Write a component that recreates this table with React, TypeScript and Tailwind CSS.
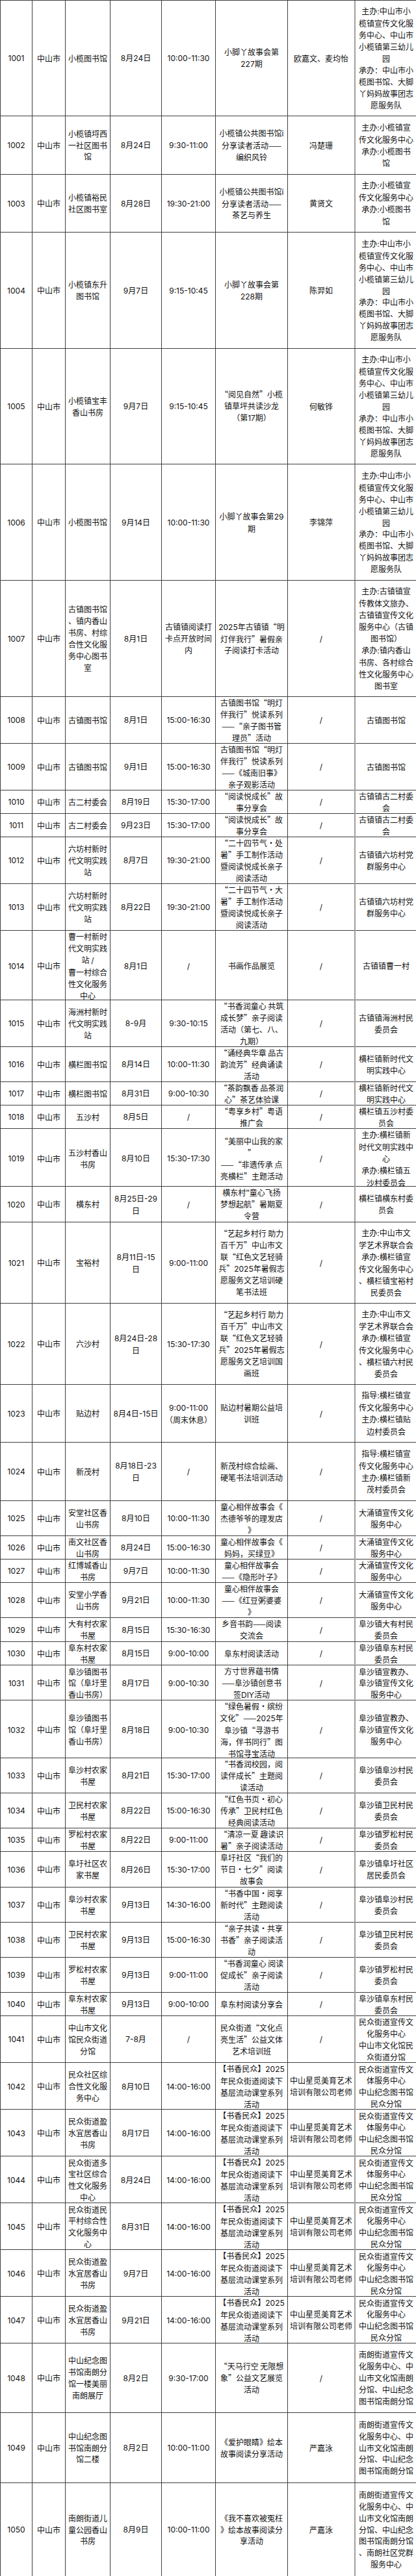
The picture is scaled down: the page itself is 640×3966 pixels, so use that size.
import React from "react";

// 每一行: [行高 class, 活动地点, 日期, 时间, 活动名称, 主讲人, 主办/承办]
// 单元格内用 "|" 分行，按原图的换行位置
const XL1 =
  "主办:中山市小|榄镇宣传文化服|务中心、中山市|小榄镇第三幼儿|园|承办：中山市小|榄图书馆、大脚|丫妈妈故事团志|愿服务队";
const XL2 = "主办:小榄镇宣|传文化服务中心|承办:小榄图书|馆";
const BOOK = "【书香民众】2025|年民众街道阅读下|基层流动课堂系列|活动";
const XM = "中山星觅美育艺术|培训有限公司老师";
const MZ1 = "民众街道宣传文|体服务中心|中山纪念图书馆|民众分馆";
const MZ2 = "民众街道宣传文|化服务中心|中山纪念图书馆|民众分馆";
const NL = "南朗街道宣传文|化服务中心、中|山市文化馆南朗|分馆、中山纪念|图书馆南朗分馆";
const DY = "大涌镇宣传文化|服务中心";
const YJ = "“艺起乡村行  助力|百千万”中山市文|联“红色文艺轻骑|兵”2025年暑假志";

const rows: string[][] = [
  ["h-[178px]", "小榄图书馆", "8月24日", "10:00-11:30", "小脚丫故事会第|227期", "欧嘉文、麦均怡", XL1],
  ["h-[90px]", "小榄镇埒西|一社区图书|馆", "8月24日", "9:30-11:00", "小榄镇公共图书馆i|分享读者活动——|编织风铃", "冯楚珊", XL2],
  ["h-[89px]", "小榄镇裕民|社区图书室", "8月28日", "19:30-21:00", "小榄镇公共图书馆i|分享读者活动——|茶艺与养生", "黄贤文", XL2],
  ["h-[179px]", "小榄镇东升|图书馆", "9月7日", "9:15-10:45", "小脚丫故事会第|228期", "陈羿如", XL1],
  ["h-[178px]", "小榄镇宝丰|香山书房", "9月7日", "9:15-10:45", "“阅见自然”小榄|镇草坪共读沙龙|（第17期）", "何敏铧", XL1],
  ["h-[179px]", "小榄图书馆", "9月14日", "10:00-11:30", "小脚丫故事会第29|期", "李锦萍", XL1],
  [
    "h-[179px]",
    "古镇图书馆|、镇内香山|书房、村综|合性文化服|务中心图书|室",
    "8月1日",
    "古镇镇阅读打|卡点开放时间|内",
    "2025年古镇镇“明|灯伴我行”暑假亲|子阅读打卡活动",
    "/",
    "主办:古镇镇宣|传教体文旅办、|古镇镇宣传文化|服务中心（古镇|图书馆）|承办:镇内香山|书房、各村综合|性文化服务中心|图书室",
  ],
  ["h-[72px]", "古镇图书馆", "8月1日", "15:00-16:30", "古镇图书馆“明灯|伴我行”悦读系列|——“亲子图书管|理员”活动", "/", "古镇图书馆"],
  ["h-[72px]", "古镇图书馆", "9月1日", "15:00-16:30", "古镇图书馆“明灯|伴我行”悦读系列|——《城南旧事》|亲子观影活动", "/", "古镇图书馆"],
  ["h-[36px]", "古二村委会", "8月19日", "15:30-17:00", "“阅读悦成长”故|事分享会", "/", "古镇镇古二村委|会"],
  ["h-[36px]", "古二村委会", "9月23日", "15:30-17:00", "“阅读悦成长”故|事分享会", "/", "古镇镇古二村委|会"],
  ["h-[72px]", "六坊村新时|代文明实践|站", "8月7日", "19:30-21:00", "“二十四节气·处|暑”手工制作活动|暨阅读悦成长亲子|阅读活动", "/", "古镇镇六坊村党|群服务中心"],
  ["h-[72px]", "六坊村新时|代文明实践|站", "8月22日", "19:30-21:00", "“二十四节气·大|暑”手工制作活动|暨阅读悦成长亲子|阅读活动", "/", "古镇镇六坊村党|群服务中心"],
  ["h-[107px]", "曹一村新时|代文明实践|站 /|曹一村综合|性文化服务|中心", "8月1日", "/", "书画作品展览", "/", "古镇镇曹一村"],
  ["h-[72px]", "海洲村新时|代文明实践|站", "8-9月", "9:30-10:15", "“书香润童心 共筑|成长梦”亲子阅读|活动（第七、八、|九期）", "/", "古镇镇海洲村民|委员会"],
  ["h-[54px]", "横栏图书馆", "8月14日", "10:00-11:30", "“诵经典华章 品古|韵流芳”经典诵读|活动", "/", "横栏镇新时代文|明实践中心"],
  ["h-[36px]", "横栏图书馆", "8月31日", "9:00-10:30", "“茶韵飘香 品茶润|心”茶艺体验课", "/", "横栏镇新时代文|明实践中心"],
  ["h-[36px]", "五沙村", "8月5日", "/", "“粤享乡村”粤语|推广会", "/", "横栏镇五沙村委|员会"],
  ["h-[89px]", "五沙村香山|书房", "8月10日", "15:30-17:30", "“美丽中山我的家|”|——“非遗传承 点|亮横栏”主题活动", "/", "主办:横栏镇新|时代文明实践中|心|承办:横栏镇五|沙村委员会"],
  ["h-[55px]", "横东村", "8月25日-29|日", "/", "横东村\"童心飞扬|梦想起航”暑期夏|令营", "/", "横栏镇横东村委|员会"],
  ["h-[125px]", "宝裕村", "8月11日-15|日", "9:00-11:00", YJ + "|愿服务文艺培训硬|笔书法班", "/", "主办:中山市文|学艺术界联合会|承办:横栏镇宣|传文化服务中心|、横栏镇宝裕村|民委员会"],
  ["h-[125px]", "六沙村", "8月24日-28|日", "15:30-17:30", YJ + "|愿服务文艺培训国|画班", "/", "主办:中山市文|学艺术界联合会|承办:横栏镇宣|传文化服务中心|、横栏镇六村民|委员会"],
  ["h-[89px]", "贴边村", "8月4日-15日", "9:00-11:00|（周末休息）", "贴边村暑期公益培|训班", "/", "指导:横栏镇宣|传文化服务中心|主办:横栏镇贴|边村委员会"],
  ["h-[90px]", "新茂村", "8月18日-23|日", "/", "新茂村综合绘画、|硬笔书法培训活动", "/", "指导:横栏镇宣|传文化服务中心|主办:横栏镇新|茂村委员会"],
  ["h-[54px]", "安堂社区香|山书房", "8月10日", "10:00-11:30", "童心相伴故事会《|杰德爷爷的理发店|》", "/", DY],
  ["h-[36px]", "南文社区香|山书房", "8月24日", "15:00-16:30", "童心相伴故事会《|妈妈，买绿豆》", "/", DY],
  ["h-[36px]", "红博城香山|书房", "9月7日", "10:00-11:30", "童心相伴故事会|——《隐形叶子》", "/", DY],
  ["h-[54px]", "安堂小学香|山书房", "9月21日", "10:00-11:30", "童心相伴故事会|——《红豆粥婆婆|》", "/", DY],
  ["h-[37px]", "大有村农家|书屋", "8月15日", "15:30-16:30", "乡音书韵——阅读|交流会", "/", "阜沙镇大有村民|委员会"],
  ["h-[36px]", "阜东村农家|书屋", "8月15日", "9:00-10:00", "阜东村阅读活动", "/", "阜沙镇阜东村民|委员会"],
  ["h-[54px]", "阜沙镇图书|馆（阜圩里|香山书房）", "8月17日", "9:00-10:30", "方寸世界蕴书情|——阜沙镇创意书|签DIY活动", "/", "阜沙镇宣教办、|阜沙镇宣传文化|服务中心"],
  ["h-[89px]", "阜沙镇图书|馆（阜圩里|香山书房）", "8月18日", "9:00-10:30", "“绿色暑假·缤纷|文化”——2025年|阜沙镇“寻游书|海，伴书同行”图|书馆寻宝活动", "/", "阜沙镇宣教办、|阜沙镇宣传文化|服务中心"],
  ["h-[54px]", "阜沙村农家|书屋", "8月21日", "15:30-17:00", "“书香润校园，阅|读伴成长”主题阅|读活动", "/", "阜沙镇阜沙村民|委员会"],
  ["h-[54px]", "卫民村农家|书屋", "8月22日", "15:00-16:30", "“红色书页·初心|传承”卫民村红色|经典阅读活动", "/", "阜沙镇卫民村民|委员会"],
  ["h-[36px]", "罗松村农家|书屋", "8月22日", "9:00-11:00", "“清凉一夏 趣读识|暑”亲子阅读活动", "/", "阜沙镇罗松村民|委员会"],
  ["h-[55px]", "阜圩社区农|家书屋", "8月26日", "15:30-17:00", "阜圩社区“我们的|节日·七夕”阅读|故事会", "/", "阜沙镇阜圩社区|居民委员会"],
  ["h-[54px]", "阜沙村农家|书屋", "9月13日", "14:30-16:00", "“书香中国·阅享|新时代”主题阅读|活动", "/", "阜沙镇阜沙村民|委员会"],
  ["h-[54px]", "卫民村农家|书屋", "9月13日", "15:00-16:30", "“亲子共读·共享|书香”亲子阅读活|动", "/", "阜沙镇卫民村民|委员会"],
  ["h-[54px]", "罗松村农家|书屋", "9月13日", "9:00-11:00", "“书香润童心 阅读|促成长”亲子阅读|活动", "/", "阜沙镇罗松村民|委员会"],
  ["h-[36px]", "阜东村农家|书屋", "9月13日", "9:00-10:00", "阜东村阅读分享会", "/", "阜沙镇阜东村民|委员会"],
  ["h-[72px]", "中山市文化|馆民众街道|分馆", "7-8月", "/", "民众街道“文化点|亮生活”公益文体|艺术培训班", "/", "民众街道宣传文|化服务中心|中山市文化馆民|众街道分馆"],
  ["h-[72px]", "民众社区综|合性文化服|务中心", "8月10日", "14:00-16:00", BOOK, XM, MZ1],
  ["h-[72px]", "民众街道盈|水宜居香山|书房", "8月17日", "14:00-16:00", BOOK, XM, MZ1],
  ["h-[72px]", "民众街道多|宝社区综合|性文化服务|中心", "8月24日", "14:00-16:00", BOOK, XM, MZ1],
  ["h-[72px]", "民众街道民|平村综合性|文化服务中|心", "8月31日", "14:00-16:00", BOOK, XM, MZ2],
  ["h-[72px]", "民众街道盈|水宜居香山|书房", "9月7日", "14:00-16:00", BOOK, XM, MZ2],
  ["h-[72px]", "民众街道盈|水宜居香山|书房", "9月21日", "14:00-16:00", BOOK, XM, MZ2],
  ["h-[107px]", "中山纪念图|书馆南朗分|馆一楼美丽|南朗展厅", "8月2日", "9:30-17:00", "“天马行空 无限想|象”公益文艺展览|活动", "/", NL],
  ["h-[108px]", "中山纪念图|书馆南朗分|馆二楼", "8月2日", "10:00-11:00", "《爱护眼睛》绘本|故事阅读分享活动", "严嘉泳", NL],
  ["h-[144px]", "南朗街道儿|童公园香山|书房", "8月9日", "10:00-11:00", "《我不喜欢被冤枉|》绘本故事阅读分|享活动", "严嘉泳", NL + "|、南朗社区党群|服务中心"],
];

const cellBase =
  "flex flex-col items-center justify-center whitespace-nowrap border-[#3f3f3f]";

// 数字、字母用西文字体，宽度更接近原图
function Line({ text }: { text: string }) {
  const parts = text.split(/([0-9A-Za-z:\-./]+)/);
  return (
    <div>
      {parts.map((p, i) =>
        /^[0-9A-Za-z:\-./]+$/.test(p) ? (
          <span key={i} className="font-['Inter',sans-serif]">
            {p}
          </span>
        ) : (
          <React.Fragment key={i}>{p}</React.Fragment>
        )
      )}
    </div>
  );
}

function Cell({ text, last, gray }: { text: string; last?: boolean; gray?: boolean }) {
  return (
    <div
      className={`${cellBase} ${last ? "" : "border-r"} ${
        gray ? "border-r-2 border-r-[#a0a0a0]" : ""
      }`}
    >
      {text.split("|").map((l, i) => (
        <Line key={i} text={l} />
      ))}
    </div>
  );
}

export default function App() {
  return (
    <div className="w-[640px] bg-white text-[#111] text-[12px] leading-[17.9px] font-['Noto_Sans_CJK_SC',sans-serif] border-t border-l border-[#3f3f3f] overflow-hidden">
      {rows.map((r, idx) => {
        const [h, place, date, time, title, speaker, host] = r;
        const cells = [String(1001 + idx), "中山市", place, date, time, title, speaker, host];
        return (
          <div
            key={idx}
            className={`grid grid-cols-[49px_51px_69px_79px_83px_111px_104px_94px] border-b border-[#3f3f3f] ${h}`}
          >
            {cells.map((c, i) => (
              <Cell key={i} text={c} gray={i === 6} last={i === 7} />
            ))}
          </div>
        );
      })}
    </div>
  );
}
